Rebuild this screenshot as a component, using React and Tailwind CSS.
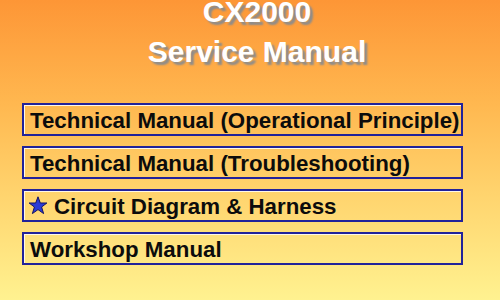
export default function App() {
  const box =
    "h-[33px] border-2 border-[#22229a] shadow-[inset_1px_1px_0_#fff8e8] flex items-center pt-[2px] text-[22.3px] leading-[25px] font-bold text-[#0c0c0c]";
  return (
    <div className="w-[500px] h-[300px] overflow-hidden bg-[linear-gradient(180deg,#fd9636_0%,#ffb850_35%,#ffd46e_65%,#fff290_100%)] font-['Liberation_Sans',Arial,sans-serif]">
      <div className="pl-[14px] flex flex-col items-center text-[30px] font-bold text-white [text-shadow:3px_3px_2px_#8c8c8c]">
        <div className="leading-[24px]">CX2000</div>
        <div className="leading-[39px] mt-[8px]">Service Manual</div>
      </div>
      <div className="mt-[32px] ml-[22px] w-[441px] flex flex-col gap-[10px]">
        <div className={box + " pl-[6px]"}>Technical Manual (Operational Principle)</div>
        <div className={box + " pl-[6px]"}>Technical Manual (Troubleshooting)</div>
        <div className={box + " pl-[4px] gap-[6px]"}>
          <svg width="20" height="19" viewBox="0 0 20 19" className="mt-[-3px] shrink-0">
            <polygon
              points="10,0.8 12.3,7 18.9,7 13.6,11 15.6,17.6 10,13.6 4.4,17.6 6.4,11 1.1,7 7.7,7"
              fill="#2a3bd6"
              stroke="#121262"
              strokeWidth="1"
              strokeLinejoin="round"
            />
          </svg>
          <span>Circuit Diagram &amp; Harness</span>
        </div>
        <div className={box + " pl-[6px]"}>Workshop Manual</div>
      </div>
    </div>
  );
}
